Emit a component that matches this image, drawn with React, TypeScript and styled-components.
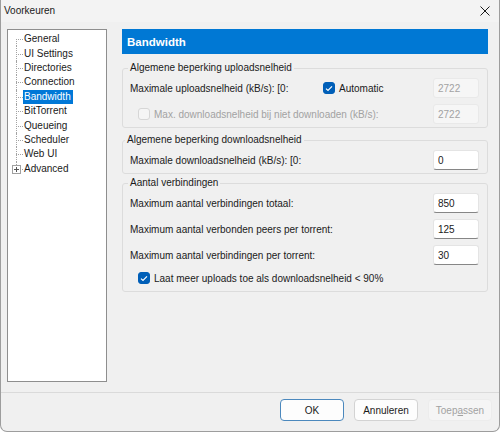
import React from "react";
import styled, { createGlobalStyle } from "styled-components";

const GlobalStyle = createGlobalStyle`
  html, body { margin: 0; padding: 0; background: #ffffff; }
  body {
    font-family: "Liberation Sans", Arial, sans-serif;
    font-size: 10px;
    color: #1a1a1a;
  }
  * { box-sizing: border-box; }
`;

const Window = styled.div`
  width: 500px;
  height: 432px;
  display: flex;
  flex-direction: column;
  background: #f0f0f0;
  border: 1px solid #9d9d9d;
  border-top: none;
  border-radius: 0 0 7px 7px;
  overflow: hidden;
`;

const TitleBar = styled.div`
  height: 22px;
  flex: none;
  display: flex;
  align-items: center;
  justify-content: space-between;
  padding: 0 9px 0 3px;
  background: #f3f3f3;
`;

const Title = styled.span`
  font-size: 10px;
  line-height: 14px;
`;

const Body = styled.div`
  flex: none;
  display: flex;
  gap: 15px;
  padding: 7px 11px 0 6px;
`;

/* ---- navigation tree ---- */

const TreePanel = styled.div`
  flex: none;
  width: 100px;
  height: 353px;
  background: #ffffff;
  border: 1px solid #8e8e8e;
  padding-top: 2px;
`;

const TreeRow = styled.div`
  display: flex;
  align-items: center;
  height: 14.4px;
`;

const Connector = styled.span<{ $first?: boolean; $last?: boolean }>`
  position: relative;
  flex: none;
  width: 15px;
  height: 100%;
  &::before {
    content: "";
    position: absolute;
    left: 8px;
    top: ${(p) => (p.$first ? "50%" : "0")};
    bottom: ${(p) => (p.$last ? "50%" : "0")};
    border-left: 1px dotted #a3a3a3;
  }
  &::after {
    content: "";
    position: absolute;
    left: 8px;
    right: 0;
    top: 50%;
    border-top: 1px dotted #a3a3a3;
  }
`;

const Expander = styled.span`
  position: absolute;
  z-index: 1;
  left: 4px;
  top: 50%;
  width: 9px;
  height: 9px;
  margin-top: -4px;
  background: #ffffff;
  border: 1px solid #a0a0a0;
  display: flex;
  align-items: center;
  justify-content: center;
`;

const TreeLabel = styled.span<{ $selected?: boolean }>`
  height: 14px;
  line-height: 14px;
  padding: 0 2px 0 1px;
  white-space: nowrap;
  color: ${(p) => (p.$selected ? "#ffffff" : "#1a1a1a")};
  background: ${(p) => (p.$selected ? "#0078d7" : "transparent")};
`;

/* ---- settings page ---- */

const Page = styled.div`
  flex: 1;
  min-width: 0;
  display: flex;
  flex-direction: column;
`;

const PageHeader = styled.div`
  height: 25px;
  display: flex;
  align-items: center;
  padding-left: 5px;
  background: #0078d4;
  color: #ffffff;
  font-size: 11.5px;
  font-weight: 700;
`;

const Group = styled.fieldset<{ $mt: number }>`
  margin: ${(p) => p.$mt}px 0 0;
  min-width: 0;
  padding: 2px 8px 3px 7px;
  border: 1px solid #dcdcdc;
  border-radius: 3px;
  display: flex;
  flex-direction: column;
  gap: 6px;
`;

const Legend = styled.legend<{ $shift?: number }>`
  padding: 0 2px;
  margin-left: ${(p) => -2 - (p.$shift ?? 0)}px;
  line-height: 16px;
  font-size: 10px;
`;

const Row = styled.div<{ $indent?: number; $pull?: number }>`
  height: 20px;
  display: flex;
  align-items: center;
  padding-left: ${(p) => p.$indent ?? 0}px;
  margin-top: ${(p) => -(p.$pull ?? 0)}px;
`;

const RowLabel = styled.span<{ $width?: number; $muted?: boolean }>`
  flex: ${(p) => (p.$width ? "none" : "1")};
  width: ${(p) => (p.$width ? `${p.$width}px` : "auto")};
  white-space: nowrap;
  color: ${(p) => (p.$muted ? "#a2a2a2" : "#1a1a1a")};
`;

const Check = styled.label<{ $muted?: boolean }>`
  flex: 1;
  display: flex;
  align-items: center;
  gap: 4px;
  white-space: nowrap;
  color: ${(p) => (p.$muted ? "#a2a2a2" : "#1a1a1a")};
`;

const Box = styled.span<{ $checked?: boolean; $disabled?: boolean }>`
  flex: none;
  width: 12px;
  height: 12px;
  border-radius: 3px;
  display: flex;
  align-items: center;
  justify-content: center;
  background: ${(p) => (p.$checked ? "#005fb8" : p.$disabled ? "#f5f5f5" : "#ffffff")};
  border: 1px solid ${(p) => (p.$checked ? "#005fb8" : p.$disabled ? "#d6d6d6" : "#8a8a8a")};
`;

const Field = styled.input`
  flex: none;
  width: 46px;
  height: 20px;
  padding: 0 4px;
  font: inherit;
  color: #1a1a1a;
  background: #ffffff;
  border: 1px solid #e4e4e4;
  border-bottom-color: #868686;
  border-radius: 3px;
  outline: none;
  &:disabled {
    color: #a2a2a2;
    background: #f6f6f6;
    border-color: #e9e9e9;
  }
`;

/* ---- dialog buttons ---- */

const Footer = styled.div`
  margin-top: 10px;
  border-top: 1px solid #dadada;
  padding: 6px 7px 0 0;
  display: flex;
  justify-content: flex-end;
  gap: 9px;
`;

const DialogButton = styled.button<{ $kind: "default" | "normal" | "disabled" }>`
  width: 64px;
  height: 22px;
  padding: 0;
  font: inherit;
  border-radius: 4px;
  background: ${(p) => (p.$kind === "disabled" ? "#f5f5f5" : "#fdfdfd")};
  color: ${(p) => (p.$kind === "disabled" ? "#a2a2a2" : "#1a1a1a")};
  border: 1px solid
    ${(p) =>
      p.$kind === "default" ? "#4b88bd" : p.$kind === "normal" ? "#d3d3d3" : "#ececec"};
  & + & { margin-left: ${(p) => (p.$kind === "disabled" ? 1 : 0)}px; }
`;

const CheckMark = () => (
  <svg width="8" height="7" viewBox="0 0 8 7">
    <path d="M1 3.6 L3 5.5 L7 1.3" fill="none" stroke="#ffffff" strokeWidth="1.2" />
  </svg>
);

const CloseIcon = () => (
  <svg width="10" height="10" viewBox="0 0 10 10">
    <path d="M0.5 0.5 L9.5 9.5 M9.5 0.5 L0.5 9.5" stroke="#1a1a1a" strokeWidth="1" />
  </svg>
);

const PlusGlyph = () => (
  <svg width="7" height="7" viewBox="0 0 7 7">
    <path d="M1 3.5 H6 M3.5 1 V6" stroke="#555555" strokeWidth="1" />
  </svg>
);

const pages = [
  "General",
  "UI Settings",
  "Directories",
  "Connection",
  "Bandwidth",
  "BitTorrent",
  "Queueing",
  "Scheduler",
  "Web UI",
  "Advanced",
];

export default function App() {
  return (
    <>
      <GlobalStyle />
      <Window>
        <TitleBar>
          <Title>Voorkeuren</Title>
          <CloseIcon />
        </TitleBar>
        <Body>
          <TreePanel>
            {pages.map((name, i) => {
              const last = i === pages.length - 1;
              return (
                <TreeRow key={name}>
                  <Connector $first={i === 0} $last={last}>
                    {last && (
                      <Expander>
                        <PlusGlyph />
                      </Expander>
                    )}
                  </Connector>
                  <TreeLabel $selected={name === "Bandwidth"}>{name}</TreeLabel>
                </TreeRow>
              );
            })}
          </TreePanel>
          <Page>
            <PageHeader>Bandwidth</PageHeader>

            <Group $mt={6}>
              <Legend>Algemene beperking uploadsnelheid</Legend>
              <Row>
                <RowLabel $width={193}>Maximale uploadsnelheid (kB/s): [0:</RowLabel>
                <Check>
                  <Box $checked>
                    <CheckMark />
                  </Box>
                  Automatic
                </Check>
                <Field disabled value="2722" readOnly />
              </Row>
              <Row $indent={8}>
                <Check $muted>
                  <Box $disabled />
                  Max. downloadsnelheid bij niet downloaden (kB/s):
                </Check>
                <Field disabled value="2722" readOnly />
              </Row>
            </Group>

            <Group $mt={4}>
              <Legend $shift={3}>Algemene beperking downloadsnelheid</Legend>
              <Row>
                <RowLabel>Maximale downloadsnelheid (kB/s): [0:</RowLabel>
                <Field value="0" readOnly />
              </Row>
            </Group>

            <Group $mt={1}>
              <Legend>Aantal verbindingen</Legend>
              <Row>
                <RowLabel>Maximum aantal verbindingen totaal:</RowLabel>
                <Field value="850" readOnly />
              </Row>
              <Row>
                <RowLabel>Maximum aantal verbonden peers per torrent:</RowLabel>
                <Field value="125" readOnly />
              </Row>
              <Row>
                <RowLabel>Maximum aantal verbindingen per torrent:</RowLabel>
                <Field value="30" readOnly />
              </Row>
              <Row $indent={8} $pull={3}>
                <Check>
                  <Box $checked>
                    <CheckMark />
                  </Box>
                  Laat meer uploads toe als downloadsnelheid &lt; 90%
                </Check>
              </Row>
            </Group>
          </Page>
        </Body>
        <Footer>
          <DialogButton $kind="default">OK</DialogButton>
          <DialogButton $kind="normal">Annuleren</DialogButton>
          <DialogButton $kind="disabled" disabled>
            Toep<u>a</u>ssen
          </DialogButton>
        </Footer>
      </Window>
    </>
  );
}
